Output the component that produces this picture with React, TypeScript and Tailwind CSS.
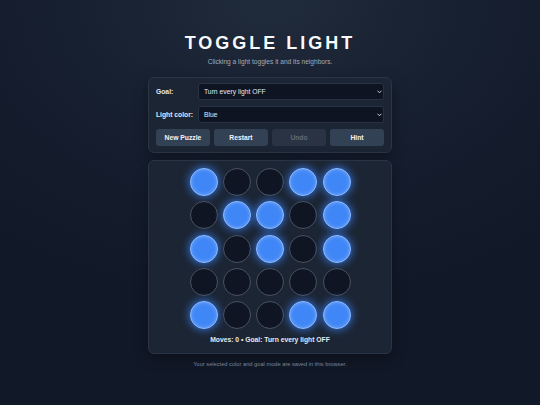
import React, { useState } from "react";

const START: number[][] = [
  [1, 0, 0, 1, 1],
  [0, 1, 1, 0, 1],
  [1, 0, 1, 0, 1],
  [0, 0, 0, 0, 0],
  [1, 0, 0, 1, 1],
];

function Chevron() {
  return (
    <svg
      width="5"
      height="4"
      viewBox="0 0 10 8"
      className="pointer-events-none absolute right-[2px] top-[6.5px]"
    >
      <path d="M1.5 2 L5 5.5 L8.5 2" fill="none" stroke="#e2e8f0" strokeWidth="1.8" strokeLinecap="round" strokeLinejoin="round" />
    </svg>
  );
}

function Field({ label, value, options }: { label: string; value: string; options: string[] }) {
  const [v, setV] = useState(value);
  return (
    <div className="flex h-[17px] items-center gap-[5px]">
      <span className="w-[37px] shrink-0 whitespace-nowrap text-[6.75px] font-bold leading-[8px] text-[#e2e8f0]">{label}</span>
      <div className="relative h-[17px] flex-1">
        <select
          value={v}
          onChange={(e) => setV(e.target.value)}
          className="block h-[17px] w-full appearance-none rounded-[3px] border border-[#273244] bg-[#0e1422] py-0 pl-[5px] pr-[10px] text-[6.75px] leading-[15px] text-[#e2e8f0] outline-none"
        >
          {options.map((o) => (
            <option key={o}>{o}</option>
          ))}
        </select>
        <Chevron />
      </div>
    </div>
  );
}

function Button({ label, disabled }: { label: string; disabled?: boolean }) {
  return (
    <button
      disabled={disabled}
      className={
        disabled
          ? "h-[17px] whitespace-nowrap rounded-[3px] bg-[#293343] text-[6.75px] font-bold leading-[8px] text-[#5f6b7c]"
          : "h-[17px] whitespace-nowrap rounded-[3px] bg-[#334155] text-[6.75px] font-bold leading-[8px] text-[#f1f5f9]"
      }
    >
      {label}
    </button>
  );
}

export default function App() {
  const [grid, setGrid] = useState(START);
  const [moves, setMoves] = useState(0);

  const toggle = (r: number, c: number) => {
    const next = grid.map((row) => row.slice());
    const flip = (y: number, x: number) => {
      if (y >= 0 && y < 5 && x >= 0 && x < 5) next[y][x] = next[y][x] ? 0 : 1;
    };
    flip(r, c);
    flip(r - 1, c);
    flip(r + 1, c);
    flip(r, c - 1);
    flip(r, c + 1);
    setGrid(next);
    setMoves(moves + 1);
  };

  return (
    <div
      className="flex min-h-screen w-full flex-col items-center bg-[radial-gradient(ellipse_80%_75%_at_50%_0%,#202b3c_0%,#172031_45%,#111827_100%)] pt-[34px] text-[#e2e8f0]"
      style={{ fontFamily: '"Liberation Sans", Arial, sans-serif' }}
    >
      <h1 className="text-[18px] font-bold leading-[18px] tracking-[3px] text-[#f8fafc]">
        TOGGLE LIGHT
      </h1>
      <p className="mt-[6px] text-[6.6px] leading-[8px] text-[#a4abb7]">
        Clicking a light toggles it and its neighbors.
      </p>

      <div className="mt-[11px] flex w-[244px] flex-col gap-[6px] rounded-[6px] border border-[#2a3445] bg-[#1c2533] px-[7px] pb-[6px] pt-[5px] shadow-[0_4px_14px_rgba(0,0,0,0.35)]">
        <Field label="Goal:" value="Turn every light OFF" options={["Turn every light OFF", "Turn every light ON"]} />
        <Field label="Light color:" value="Blue" options={["Blue", "Green", "Amber", "Pink"]} />
        <div className="grid grid-cols-4 gap-[4px]">
          <Button label="New Puzzle" />
          <Button label="Restart" />
          <Button label="Undo" disabled />
          <Button label="Hint" />
        </div>
      </div>

      <div className="mt-[7px] flex w-[244px] flex-col items-center rounded-[6px] border border-[#2a3445] bg-[#1c2533] pb-[9px] pt-[7px] shadow-[0_4px_14px_rgba(0,0,0,0.35)]">
        <div className="grid grid-cols-[repeat(5,28px)] gap-[5.25px]">
          {grid.map((row, r) =>
            row.map((on, c) => (
              <button
                key={`${r}-${c}`}
                onClick={() => toggle(r, c)}
                className={
                  on
                    ? "h-[28px] w-[28px] rounded-full border border-[#8fbcff] bg-[#3f86f6] shadow-[0_0_8px_1px_rgba(59,130,246,0.8),inset_0_0_4px_rgba(191,219,254,0.45)]"
                    : "h-[28px] w-[28px] rounded-full border border-[#4a5262] bg-[#0f1522]"
                }
              />
            ))
          )}
        </div>
        <div className="mt-[7px] text-[6.75px] font-bold leading-[8px] text-[#e5e9f0]">
          Moves: {moves} • Goal: Turn every light OFF
        </div>
      </div>

      <p className="mt-[6px] text-[5.7px] leading-[8px] text-[#7b8698]">
        Your selected color and goal mode are saved in this browser.
      </p>
    </div>
  );
}
